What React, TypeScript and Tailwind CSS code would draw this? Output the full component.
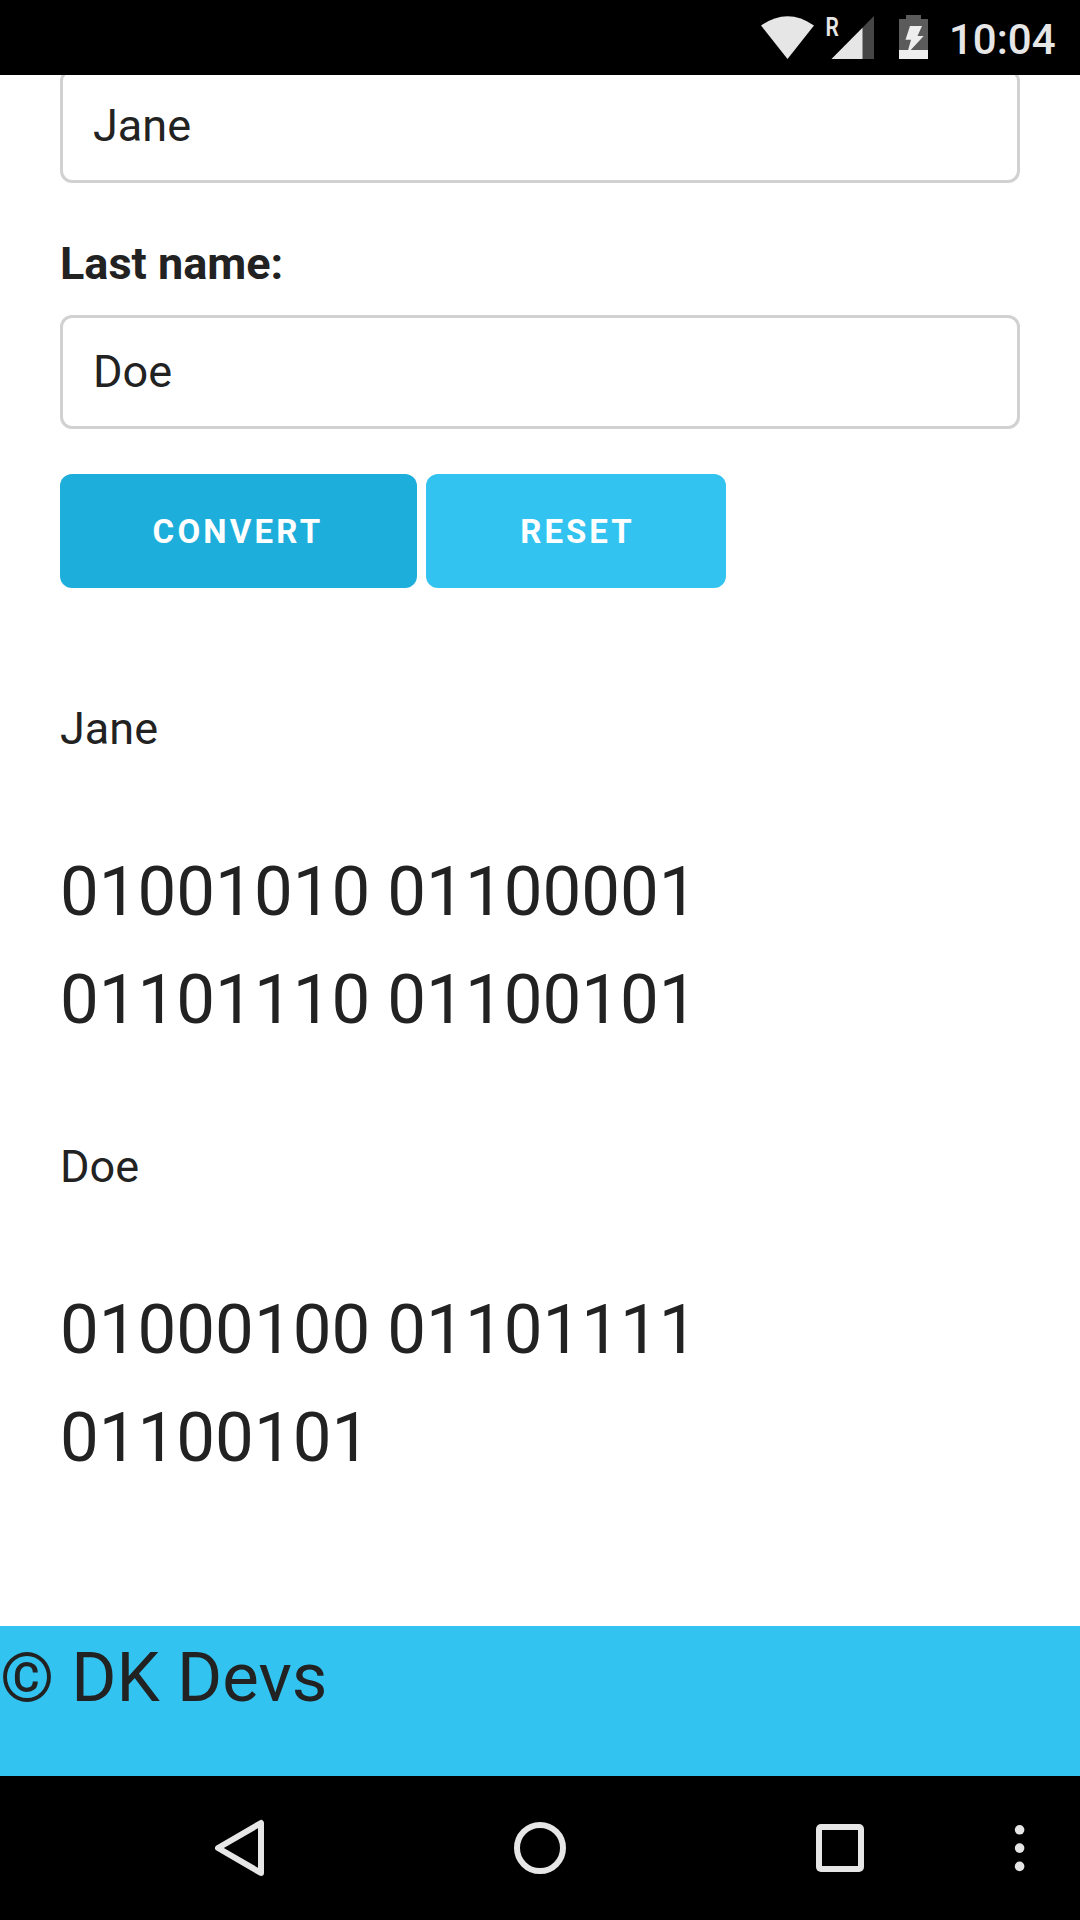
const Btn = ({ t, c }: { t: string; c: string }) => (
  <button className={`h-[114px] rounded-[12px] pt-[2px] text-center text-[33px] font-bold text-white ${c}`}>{t}</button>
);

const Result = ({ name, lines, c }: { name: string; lines: string[]; c: string }) => (
  <section className={c}>
    <p className="text-[45px] leading-[72px]">{name}</p>
    <div className="mt-[73px] text-[69px] leading-[108px]">
      {lines.map((l) => (
        <p key={l}>{l}</p>
      ))}
    </div>
  </section>
);

export default function App() {
  return (
    <div className="flex h-[1920px] w-[1080px] flex-col overflow-hidden bg-white font-['Roboto',sans-serif] text-[#222222]">
      <header className="z-10 flex h-[75px] shrink-0 bg-black">
        <svg width="1080" height="75" viewBox="0 0 1080 75" fill="#e6e6e6">
          <path d="M761 25.5Q787.5 7 814 25.5L787.5 59Z" />
          <path d="M874 16V59H831.5Z" fill="#464646" />
          <path d="M862.5 27.7V59H831.5Z" />
          <text transform="translate(825.6 35.5) scale(.82 1)" fontSize="25.7" fontWeight="600">R</text>
          <path d="M899 19H906V15H921V19H928V50H899Z" fill="#5b5b5b" />
          <path d="M899 50H928V59H899Z" fill="#eeeeee" />
          <path d="M910 26H922L917.5 36H923.7L907 54L911 39.7H905.5Z" fill="#eeeeee" />
          <text x="949" y="54" fontSize="42" fontWeight="500">10:04</text>
        </svg>
      </header>
      <main className="h-[1551px] shrink-0 px-[60px]">
        <div className="-mt-[6px] h-[114px] rounded-[12px] border-[3px] border-[#d1d1d1] px-[30px] text-[45px] leading-[108px]">Jane</div>
        <label className="mt-[45px] block text-[45px] leading-[72px] font-bold">Last name:</label>
        <div className="mt-[15px] h-[114px] rounded-[12px] border-[3px] border-[#d1d1d1] px-[30px] text-[45px] leading-[108px]">Doe</div>
        <div className="mt-[45px] flex gap-[9px]">
          <Btn t="CONVERT" c="w-[357px] bg-[#1eaedb] pr-[1px] tracking-[3.2px]" />
          <Btn t="RESET" c="w-[300px] bg-[#33c3f0] pl-[3px] tracking-[3px]" />
        </div>
        <Result name="Jane" lines={["01001010 01100001", "01101110 01100101"]} c="mt-[105px]" />
        <Result name="Doe" lines={["01000100 01101111", "01100101"]} c="mt-[77px]" />
      </main>
      <footer className="h-[150px] shrink-0 bg-[#33c3f0] text-[69px] leading-[104px]">© DK Devs</footer>
      <nav className="h-[144px] shrink-0 bg-black">
        <svg width="1080" height="144" viewBox="0 1776 1080 144" fill="none" stroke="#e6e6e6" strokeWidth="6" strokeLinejoin="round">
          <path d="M218 1848L261 1823V1873Z" />
          <circle cx="540" cy="1848" r="23" />
          <rect x="816" y="1824" width="48" height="48" rx="5" fill="#e6e6e6" stroke="none" />
          <rect x="822" y="1830" width="36" height="36" fill="#000" stroke="none" />
          <g fill="#e6e6e6" stroke="none">
            <circle cx="1019.6" cy="1829.8" r="4.8" />
            <circle cx="1019.6" cy="1848.1" r="4.8" />
            <circle cx="1019.6" cy="1866.4" r="4.8" />
          </g>
        </svg>
      </nav>
    </div>
  );
}
